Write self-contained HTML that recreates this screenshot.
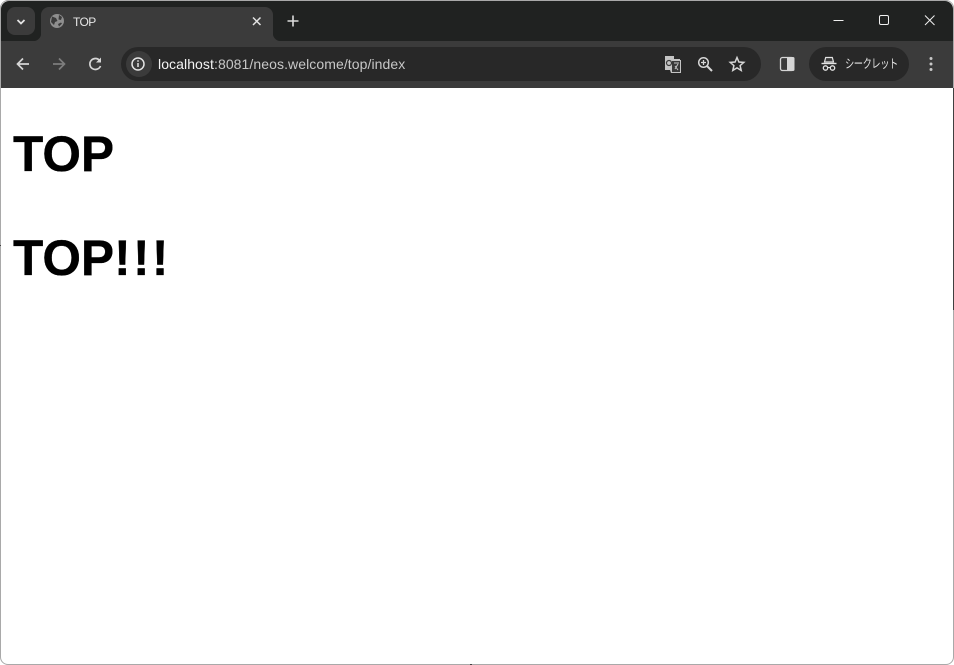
<!DOCTYPE html>
<html lang="ja">
<head>
<meta charset="utf-8">
<title>TOP</title>
<style>
html,body{margin:0;padding:0;background:#fff;}
body{width:954px;height:665px;overflow:hidden;position:relative;font-family:"Liberation Sans","Noto Sans CJK JP",sans-serif;}
.a{position:absolute;}
#frame{left:0;top:0;width:954px;height:665px;box-sizing:border-box;border:1px solid #a9a9a9;border-radius:8px;pointer-events:none;}
#tabs{left:1px;top:1px;width:952px;height:40px;background:#202221;border-radius:8px 8px 0 0;}
#bar{left:1px;top:41px;width:952px;height:47px;background:#3b3b3b;}
#tab{left:41px;top:7px;width:232px;height:34px;background:#3b3b3b;border-radius:8px 8px 0 0;}
#tabl{left:33px;top:33px;width:8px;height:8px;background:radial-gradient(circle at 0 0,#202221 8px,#3b3b3b 8.5px);}
#tabr{left:273px;top:33px;width:8px;height:8px;background:radial-gradient(circle at 100% 0,#202221 8px,#3b3b3b 8.5px);}
#search{left:7px;top:7px;width:28px;height:28px;background:#3b3b3b;border-radius:8px;}
#title{left:73px;top:14px;font-size:12px;line-height:16px;color:#e6e6e6;letter-spacing:-.6px;}
#omni{left:121px;top:47px;width:640px;height:34px;background:#282828;border-radius:17px;}
#info{left:126px;top:51px;width:26px;height:26px;background:#3b3b3b;border-radius:13px;}
#url{left:158px;top:55px;font-size:14px;line-height:18px;color:#c7c7c7;white-space:nowrap;letter-spacing:.08px;}
#url b{font-weight:normal;color:#f4f4f4;}
#inc{left:809px;top:47px;width:100px;height:34px;background:#282828;border-radius:17px;}
#inct{left:845px;top:56px;font-size:12.500px;line-height:16px;color:#e3e3e3;white-space:nowrap;letter-spacing:-.6px;transform:scaleX(.74);transform-origin:0 0;}
h1{position:absolute;left:13px;margin:0;font-size:49.6px;line-height:56px;font-weight:bold;color:#000;white-space:nowrap;-webkit-text-stroke:.35px #000;}
h1 span{letter-spacing:2.4px;}
svg{position:absolute;left:0;top:0;}
</style>
</head>
<body>
<div class="a" id="tabs"></div>
<div class="a" id="bar"></div>
<div class="a" id="tabl"></div>
<div class="a" id="tabr"></div>
<div class="a" id="tab"></div>
<div class="a" id="search"></div>
<div class="a" id="title">TOP</div>
<div class="a" id="omni"></div>
<div class="a" id="info"></div>
<div class="a" id="url"><b>localhost</b>:8081/neos.welcome/top/index</div>
<div class="a" id="inc"></div>
<div class="a" id="inct">シークレット</div>
<svg width="954" height="88" viewBox="0 0 954 88" fill="none">
  <path d="M17.5 20l3.5 3.5 3.5-3.5" stroke="#e3e3e3" stroke-width="1.8"/>
  <circle cx="57" cy="21" r="7" fill="#8e8e8e"/>
  <path d="M52 16.5l4 1.5 1.500 3-2.500 1-1 3-3-3zM59 15l3 2-1 3-2.500-.5zM58 24l3-1.500 1 1-3 3z" fill="#3b3b3b"/>
  <path d="M253 17.500l7.500 7.500M260.500 17.500L253 25" stroke="#e3e3e3" stroke-width="1.500"/>
  <path d="M293 15.500v11M287.500 21h11" stroke="#dcdcdc" stroke-width="1.600"/>
  <path d="M833.500 20.500h10" stroke="#f0f0f0" stroke-width="1"/>
  <rect x="879.500" y="15.500" width="9" height="9" rx="1.500" stroke="#f0f0f0" stroke-width="1"/>
  <path d="M925 15.500l9.500 9.500M934.500 15.500L925 25" stroke="#f0f0f0" stroke-width="1"/>
  <path d="M29 64H18M23 58.500L17.500 64l5.500 5.500" stroke="#d6d6d6" stroke-width="1.700"/>
  <path d="M53 64h11M59 58.500l5.500 5.500-5.500 5.500" stroke="#7d7d7d" stroke-width="1.700"/>
  <path d="M100.500 66a5.500 5.500 0 1 1-.5-5" stroke="#d6d6d6" stroke-width="1.700"/>
  <path d="M101 57.500v5h-5z" fill="#d6d6d6"/>
  <circle cx="138" cy="64" r="6" stroke="#e3e3e3" stroke-width="1.500"/>
  <path d="M138 63v4M138 60.300v1.500" stroke="#e3e3e3" stroke-width="1.500"/>
  <path d="M665 56h9v3h6v14h-9l-1-3h-5z" fill="#c4c4c4"/>
  <rect x="671.500" y="60.500" width="9" height="12" fill="#3a3a3a" stroke="#c4c4c4"/>
  <circle cx="669" cy="63" r="2.500" stroke="#3a3a3a" stroke-width="1.200"/>
  <path d="M674 63h5M675 66l3 4M678 64l-3 5" stroke="#c4c4c4" stroke-width="1"/>
  <circle cx="703.500" cy="62.500" r="4.800" stroke="#d6d6d6" stroke-width="1.500"/>
  <path d="M707 66l5 5" stroke="#d6d6d6" stroke-width="2"/>
  <path d="M701 62.500h5M703.500 60v5" stroke="#d6d6d6" stroke-width="1.300"/>
  <path d="M737 57.500l1.900 4.500 4.900.4-3.700 3.200 1.100 4.800-4.200-2.500-4.200 2.500 1.100-4.800-3.700-3.200 4.900-.4z" stroke="#d6d6d6" stroke-width="1.500"/>
  <rect x="780.500" y="57.500" width="13" height="13" rx="2" stroke="#d6d6d6" stroke-width="1.300"/>
  <path d="M787 57h6a1.500 1.500 0 0 1 1.500 1.500v11a1.500 1.500 0 0 1-1.500 1.500h-6z" fill="#d6d6d6"/>
  <path d="M824.500 62l1.200-4.500h6.600l1.200 4.500z" stroke="#e3e3e3" stroke-width="1.200" fill="#3a3a3a"/>
  <path d="M821.500 63.500h15" stroke="#e3e3e3" stroke-width="1.400"/>
  <circle cx="825.500" cy="68" r="2.200" stroke="#e3e3e3" stroke-width="1.300"/>
  <circle cx="832.500" cy="68" r="2.200" stroke="#e3e3e3" stroke-width="1.300"/>
  <path d="M827.800 67.500h2.400" stroke="#e3e3e3" stroke-width="1"/>
  <circle cx="931" cy="58.500" r="1.500" fill="#c8c8c8"/>
  <circle cx="931" cy="64" r="1.500" fill="#c8c8c8"/>
  <circle cx="931" cy="69.500" r="1.500" fill="#c8c8c8"/>
</svg>
<h1 style="top:126px">TOP</h1>
<h1 style="top:230px">TOP<span>!!!</span></h1>
<div class="a" id="frame"></div>
<div class="a" style="left:953px;top:88px;width:1px;height:222px;background:#404040"></div>
<div class="a" style="left:470px;top:664px;width:2px;height:1px;background:#404040"></div>
<div class="a" style="left:0;top:245px;width:1px;height:1px;background:#404040"></div>
</body>
</html>
